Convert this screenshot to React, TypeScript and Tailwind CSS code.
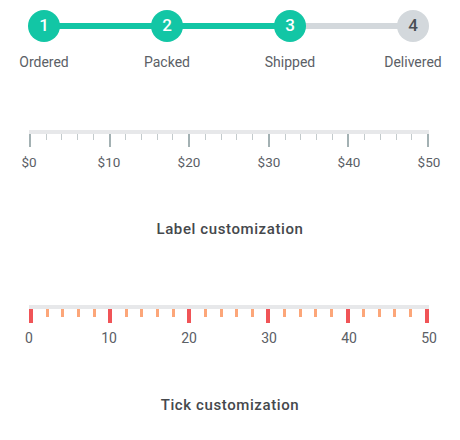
const steps = ['Ordered', 'Packed', 'Shipped', 'Delivered']
const ticks = Array.from({ length: 26 }, (_, i) => i * 2)
const labels = [0, 10, 20, 30, 40, 50]

function Stepper() {
  const current = 3
  return (
    <div className="relative pl-[9px] pr-[12px] pt-[10px]">
      <div className="absolute left-[44px] top-[23px] h-[6px] w-[246px] bg-[#12c6a5]" />
      <div className="absolute left-[290px] top-[23px] h-[6px] w-[123px] bg-[#d3d8dc]" />
      <div className="relative flex justify-between">
        {steps.map((s, i) => (
          <div key={s} className="flex w-[70px] flex-col items-center">
            <div
              className={
                i < current
                  ? 'flex h-[32px] w-[32px] items-center justify-center rounded-full bg-[#12c6a5] text-[17px] font-medium text-white'
                  : 'flex h-[32px] w-[32px] items-center justify-center rounded-full bg-[#d3d8dc] text-[17px] font-medium text-[#4a4f55]'
              }
            >
              {i + 1}
            </div>
            <div className="mt-[12px] text-[14px] leading-[16px] text-[#5b6066]">{s}</div>
          </div>
        ))}
      </div>
    </div>
  )
}

function Ruler({ prefix, custom }: { prefix: string; custom?: boolean }) {
  return (
    <div className="ml-[29px] w-[400px]">
      <div className="h-[4px] bg-[#e7e8ea]" />
      <div className="flex h-[14px] items-start justify-between">
        {ticks.map(t => {
          const major = t % 10 === 0
          if (custom) {
            return major ? (
              <div key={t} className="h-[14px] w-[4px] bg-[#f05457]" />
            ) : (
              <div key={t} className="h-[8px] w-[3px] bg-[#fca679]" />
            )
          }
          return major ? (
            <div key={t} className="h-[13px] w-[2px] bg-[#a3b1b3]" />
          ) : (
            <div key={t} className="h-[6px] w-[1px] bg-[#c3cacc]" />
          )
        })}
      </div>
      <div className={custom ? 'mt-[7px] flex justify-between' : 'mt-[6px] flex justify-between'}>
        {labels.map(l => (
          <div key={l} className="flex w-0 justify-center">
            <span
              className={
                custom
                  ? 'whitespace-nowrap text-[14px] leading-[16px] text-[#5b6066]'
                  : 'whitespace-nowrap text-[13.5px] leading-[16px] text-[#5b6066]'
              }
            >
              {prefix}
              {l}
            </span>
          </div>
        ))}
      </div>
    </div>
  )
}

export default function App() {
  return (
    <div className="h-[440px] w-[460px] bg-white font-['Roboto',sans-serif]">
      <Stepper />
      <div className="mt-[60px]">
        <Ruler prefix="$" />
      </div>
      <div className="mt-[49px] text-center text-[15px] font-medium leading-[20px] tracking-[0.6px] text-[#45484c]">
        Label customization
      </div>
      <div className="mt-[66px]">
        <Ruler prefix="" custom />
      </div>
      <div className="mt-[49px] text-center text-[15px] font-medium leading-[20px] tracking-[0.6px] text-[#45484c]">
        Tick customization
      </div>
    </div>
  )
}
